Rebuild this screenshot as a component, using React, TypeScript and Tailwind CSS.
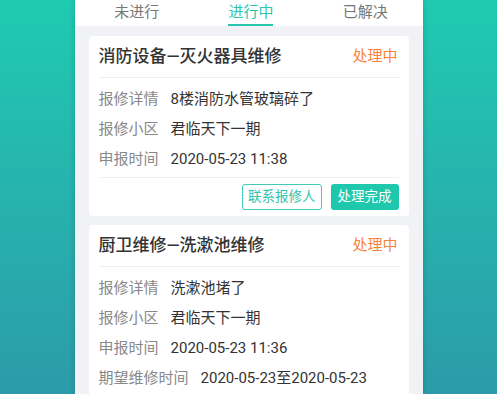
import { FC } from 'react'

interface Row {
  label: string
  value: string
}

interface OrderProps {
  title: string
  status: string
  rows: Row[]
  actions?: boolean
}

const OrderCard: FC<OrderProps> = ({ title, status, rows, actions }) => {
  return (
    <div className="bg-white rounded-[4px] px-[10px]">
      <div className="h-[42px] flex items-center justify-between border-b border-[#eeeeee]">
        <span className="text-[17px] font-medium text-[#333333] leading-none">{title}</span>
        <span className="text-[15px] text-[#f7843a] leading-none mr-[1px]">{status}</span>
      </div>
      <div className={`pt-[6px] pb-[3px] ${actions ? 'border-b border-[#f0f0f0]' : ''}`}>
        {rows.map((r) => (
          <div key={r.label} className="h-[30px] flex items-center text-[15px] leading-none">
            <span className="text-[#888888] mr-[12px]">{r.label}</span>
            <span className="text-[#333333]">{r.value}</span>
          </div>
        ))}
      </div>
      {actions && (
        <div className="flex justify-end gap-[9px] pt-[6px] pb-[6px]">
          <button className="h-[26px] px-[5px] rounded-[3px] border border-[#3fcbb6] text-[#2fc4ae] text-[13.5px] leading-none">
            联系报修人
          </button>
          <button className="h-[26px] px-[7px] rounded-[3px] bg-[#1fc8ad] text-white text-[13.5px] leading-none">
            处理完成
          </button>
        </div>
      )}
    </div>
  )
}

const tabs = ['未进行', '进行中', '已解决']

export default function App() {
  return (
    <div
      className="w-full h-[394px] overflow-hidden flex justify-center bg-gradient-to-b from-[#1fcab1] to-[#2b9ba9]"
      style={{ fontFamily: 'Roboto, "Noto Sans CJK SC", sans-serif' }}
    >
      <div className="w-[348px] h-full bg-[#f1f2f6] shadow-[0_0_6px_rgba(0,0,0,0.18)] flex flex-col">
        <div className="h-[26px] bg-white flex pl-[5px] shrink-0">
          {tabs.map((t, i) => (
            <div key={t} className="w-[116px] flex flex-col items-center">
              <span
                className={`pt-[2px] h-[22px] leading-[20px] text-[15px] ${
                  i === 1 ? 'text-[#2cc6ae]' : 'text-[#777777]'
                }`}
              >
                {t}
              </span>
              {i === 1 && <div className="w-[45px] h-[2px] mt-[2px] bg-[#2cc6ae]" />}
            </div>
          ))}
        </div>
        <div className="flex flex-col gap-[9px] px-[14px] pt-[10px]">
          <OrderCard
            title="消防设备—灭火器具维修"
            status="处理中"
            actions
            rows={[
              { label: '报修详情', value: '8楼消防水管玻璃碎了' },
              { label: '报修小区', value: '君临天下一期' },
              { label: '申报时间', value: '2020-05-23 11:38' },
            ]}
          />
          <OrderCard
            title="厨卫维修—洗漱池维修"
            status="处理中"
            rows={[
              { label: '报修详情', value: '洗漱池堵了' },
              { label: '报修小区', value: '君临天下一期' },
              { label: '申报时间', value: '2020-05-23 11:36' },
              { label: '期望维修时间', value: '2020-05-23至2020-05-23' },
            ]}
          />
        </div>
      </div>
    </div>
  )
}
